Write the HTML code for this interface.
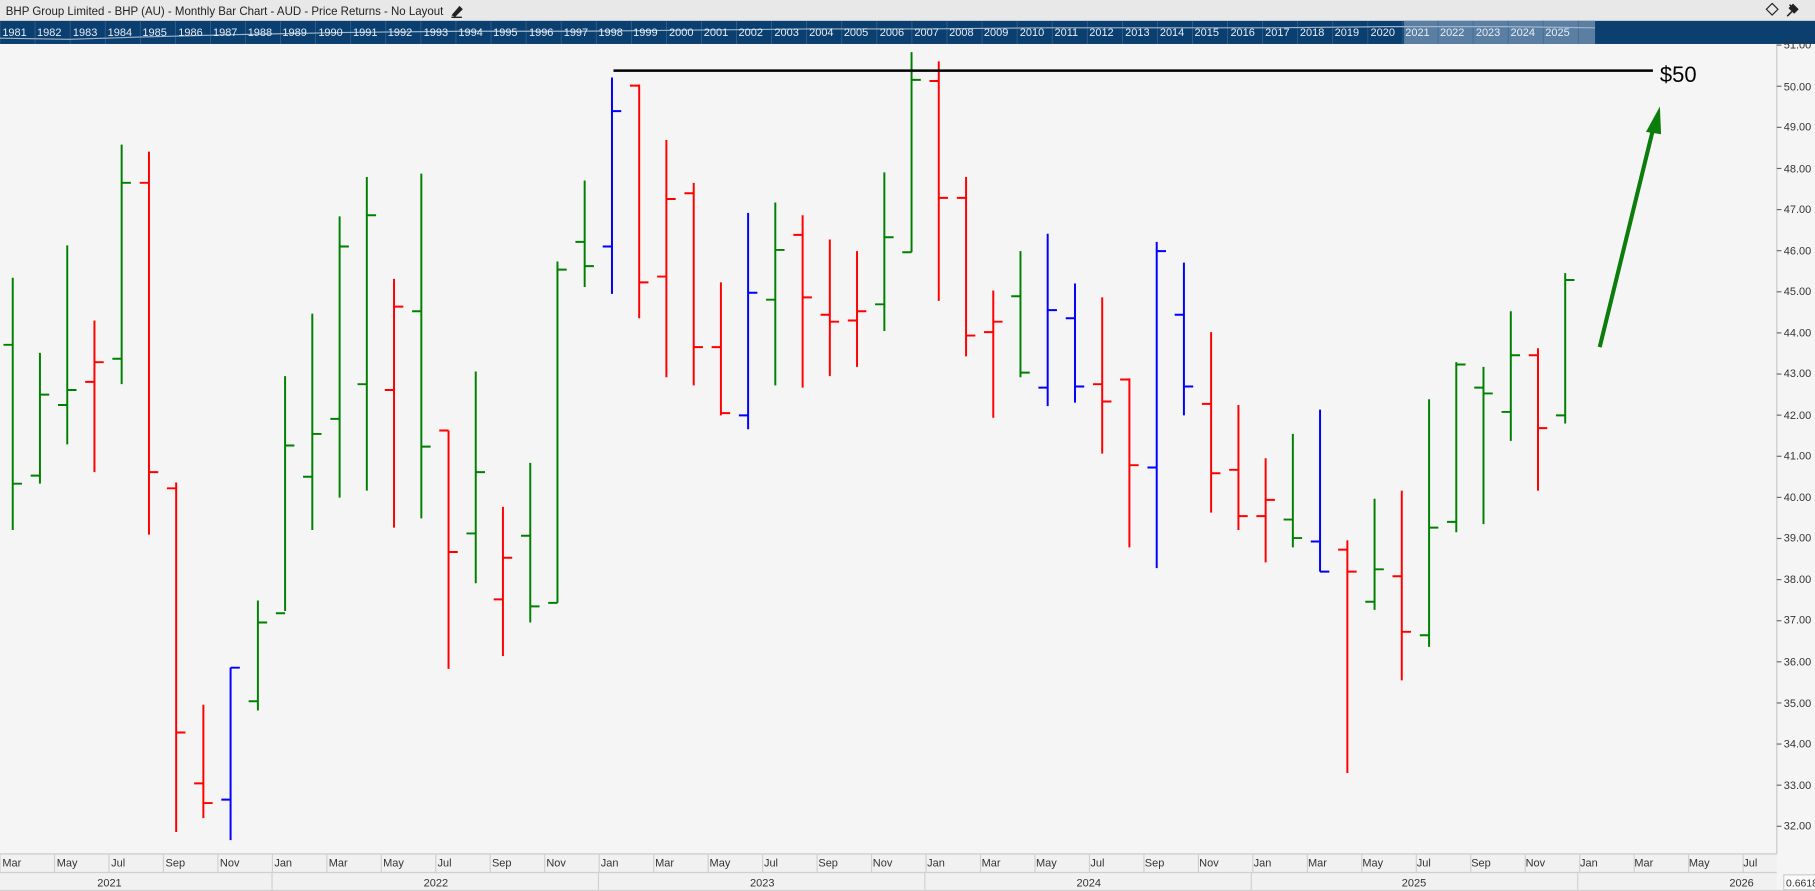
<!DOCTYPE html>
<html><head><meta charset="utf-8"><style>
html,body{margin:0;padding:0;width:1815px;height:891px;overflow:hidden;background:#f5f5f5;font-family:"Liberation Sans",sans-serif}
svg{display:block}
</style></head><body>
<svg id="s" width="1815" height="891" viewBox="0 0 1568 770" preserveAspectRatio="none" xmlns="http://www.w3.org/2000/svg" font-family="Liberation Sans, sans-serif">
<rect x="0" y="0" width="1568" height="770" fill="#f5f5f5"/>
<rect x="0" y="0" width="1568" height="18" fill="#e8e8e8"/>
<text x="5" y="13" font-size="10.5" fill="#222" textLength="378" lengthAdjust="spacingAndGlyphs">BHP Group Limited - BHP (AU) - Monthly Bar Chart - AUD - Price Returns - No Layout</text>
<path d="M391 13 L397 6 L399 8 L393 14 Z M390 15 L399 15" stroke="#222" stroke-width="1.2" fill="#222"/>
<path d="M1531 3 L1536 8 L1531 13 L1526 8 Z" fill="none" stroke="#222" stroke-width="1"/>
<path d="M1546 4 L1552 10 M1549 4 L1553 8 L1550 11 L1546 7 Z M1548 10 L1544 14" stroke="#222" stroke-width="1.3" fill="#222"/>
<rect x="0" y="18" width="1568" height="20" fill="#0b3f70"/>
<rect x="1213" y="18" width="165" height="20" fill="#5b7fa3"/>
<g id="nav" font-size="9.5" fill="#e6eef6"></g>
<path d="M0 33 L60 34 L120 32 L200 30 L300 28 L400 27 L500 27 L600 26 L700 25 L800 25 L900 24 L1000 24 L1100 24 L1200 23 L1300 23 L1378 24" stroke="#9fb6cc" stroke-width="1" fill="none"/>
<line x1="1535" y1="38" x2="1535" y2="738" stroke="#c8c8c8" stroke-width="1"/>
<g id="yax" font-size="9.5" fill="#333"></g>
<g id="bars" stroke-width="1.7" fill="none"></g>
<line x1="530" y1="61" x2="1428" y2="61" stroke="#000" stroke-width="2.2"/>
<text x="1434" y="71" font-size="19" fill="#000">$50</text>
<line x1="1382" y1="300" x2="1428" y2="112" stroke="#0a7d0a" stroke-width="3.5"/>
<path d="M1434 92 L1422 114 L1435 116 Z" fill="#0a7d0a"/>
<rect x="0" y="738" width="1535" height="32" fill="#f1f1f1"/>
<line x1="0" y1="738" x2="1535" y2="738" stroke="#c8c8c8"/>
<line x1="0" y1="754" x2="1535" y2="754" stroke="#d0d0d0"/>
<line x1="0" y1="769.5" x2="1568" y2="769.5" stroke="#d0d0d0"/>
<g id="mx" font-size="9.5" fill="#333"></g>
<g font-size="9.5" fill="#333">
<text x="84" y="766">2021</text><text x="366" y="766">2022</text><text x="648" y="766">2023</text><text x="930" y="766">2024</text><text x="1211" y="766">2025</text><text x="1494" y="766">2026</text>
</g>
<g stroke="#d0d0d0"><line x1="235" y1="754" x2="235" y2="769"/><line x1="517" y1="754" x2="517" y2="769"/><line x1="799" y1="754" x2="799" y2="769"/><line x1="1081" y1="754" x2="1081" y2="769"/><line x1="1363" y1="754" x2="1363" y2="769"/></g>
<rect x="1541" y="756" width="30" height="13" fill="#fafafa" stroke="#ccc"/>
<text x="1543" y="766" font-size="9" fill="#333">0.6618</text>
<g font-size="9.5" fill="#333">
<text x="1541" y="42">51.00</text><text x="1541" y="78">50.00</text><text x="1541" y="113">49.00</text><text x="1541" y="149">48.00</text><text x="1541" y="184">47.00</text><text x="1541" y="220">46.00</text><text x="1541" y="255">45.00</text><text x="1541" y="291">44.00</text><text x="1541" y="326">43.00</text><text x="1541" y="362">42.00</text><text x="1541" y="397">41.00</text><text x="1541" y="433">40.00</text><text x="1541" y="468">39.00</text><text x="1541" y="504">38.00</text><text x="1541" y="539">37.00</text><text x="1541" y="575">36.00</text><text x="1541" y="611">35.00</text><text x="1541" y="646">34.00</text><text x="1541" y="682">33.00</text><text x="1541" y="717">32.00</text>
</g>
<g font-size="9.5" fill="#333">
<text x="2" y="749">Mar</text><text x="49" y="749">May</text><text x="96" y="749">Jul</text><text x="143" y="749">Sep</text><text x="190" y="749">Nov</text><text x="237" y="749">Jan</text><text x="284" y="749">Mar</text><text x="331" y="749">May</text><text x="378" y="749">Jul</text><text x="425" y="749">Sep</text><text x="472" y="749">Nov</text><text x="519" y="749">Jan</text><text x="566" y="749">Mar</text><text x="613" y="749">May</text><text x="660" y="749">Jul</text><text x="707" y="749">Sep</text><text x="754" y="749">Nov</text><text x="801" y="749">Jan</text><text x="848" y="749">Mar</text><text x="895" y="749">May</text><text x="942" y="749">Jul</text><text x="989" y="749">Sep</text><text x="1036" y="749">Nov</text><text x="1083" y="749">Jan</text><text x="1130" y="749">Mar</text><text x="1177" y="749">May</text><text x="1224" y="749">Jul</text><text x="1271" y="749">Sep</text><text x="1318" y="749">Nov</text><text x="1365" y="749">Jan</text><text x="1412" y="749">Mar</text><text x="1459" y="749">May</text><text x="1506" y="749">Jul</text>
</g>
<g font-size="9.5" fill="#e6eef6">
<text x="2" y="31">1981</text><text x="32" y="31">1982</text><text x="63" y="31">1983</text><text x="93" y="31">1984</text><text x="123" y="31">1985</text><text x="154" y="31">1986</text><text x="184" y="31">1987</text><text x="214" y="31">1988</text><text x="244" y="31">1989</text><text x="275" y="31">1990</text><text x="305" y="31">1991</text><text x="335" y="31">1992</text><text x="366" y="31">1993</text><text x="396" y="31">1994</text><text x="426" y="31">1995</text><text x="457" y="31">1996</text><text x="487" y="31">1997</text><text x="517" y="31">1998</text><text x="547" y="31">1999</text><text x="578" y="31">2000</text><text x="608" y="31">2001</text><text x="638" y="31">2002</text><text x="669" y="31">2003</text><text x="699" y="31">2004</text><text x="729" y="31">2005</text><text x="760" y="31">2006</text><text x="790" y="31">2007</text><text x="820" y="31">2008</text><text x="850" y="31">2009</text><text x="881" y="31">2010</text><text x="911" y="31">2011</text><text x="941" y="31">2012</text><text x="972" y="31">2013</text><text x="1002" y="31">2014</text><text x="1032" y="31">2015</text><text x="1063" y="31">2016</text><text x="1093" y="31">2017</text><text x="1123" y="31">2018</text><text x="1153" y="31">2019</text><text x="1184" y="31">2020</text><text x="1214" y="31">2021</text><text x="1244" y="31">2022</text><text x="1275" y="31">2023</text><text x="1305" y="31">2024</text><text x="1335" y="31">2025</text>
</g>
</svg>
<script>
var d=[
["g",240,458,298,418],["g",305,418,411,341],["g",212,384,350,337],["r",277,408,330,313],["g",125,332,310,158],
["r",131,462,158,408],["r",417,719,422,633],["r",609,707,677,694],["b",577,726,691,577],["g",519,614,606,538],
["g",325,528,530,385],["g",271,458,412,375],["g",187,430,362,213],["g",153,424,332,186],["r",241,456,337,265],
["g",150,448,269,386],["r",372,578,372,477],["g",321,504,461,408],["r",438,567,518,482],["g",400,538,463,524],
["g",226,521,521,233],["g",156,248,209,230],["b",67,254,213,96],["r",73,275,74,244],["r",121,326,239,172],
["r",158,333,167,300],["r",244,359,300,357],["b",184,371,359,253],["g",175,333,259,216],["r",186,335,203,257],
["r",207,325,272,278],["r",217,317,277,269],["g",149,286,263,205],["g",45,218,218,69],["r",53,260,70,171],
["r",153,308,171,290],["r",251,361,287,278],["g",217,326,256,322],["b",202,351,335,268],["b",245,348,275,334],
["r",257,392,332,347],["r",327,473,328,402],["b",209,491,404,217],["b",227,359,272,334],["r",287,443,349,409],
["r",350,458,406,446],["r",396,486,446,432],["g",375,473,449,465],["b",354,494,468,494],["r",467,668,475,494],
["g",431,527,520,492],["r",424,588,498,546],["g",345,559,549,456],["g",313,460,451,315],["g",317,453,335,340],
["g",269,381,356,307],["r",301,424,307,370],["g",236,366,359,242]];
var c={g:"#008000",r:"#ff0000",b:"#0000ff"},h="";
d.forEach(function(b,i){var x=(11+i*23.53).toFixed(1);
h+='<path stroke="'+c[b[0]]+'" d="M'+x+' '+b[1]+'V'+b[2]+'M'+(x-8)+' '+b[3]+'H'+x+'M'+x+' '+b[4]+'H'+(+x+8)+'"/>';});
document.getElementById("bars").innerHTML=h;
var m="";for(var i=0;i<33;i++){var x=i*47.06;m+='<line x1="'+x+'" y1="738" x2="'+x+'" y2="754" stroke="#d0d0d0"/>';}
document.getElementById("mx").innerHTML=m;
var n="";for(var i=0;i<46;i++){var x=(i*30.3).toFixed(1);n+='<line x1="'+x+'" y1="18" x2="'+x+'" y2="38" stroke="#3d6690" stroke-width="0.6"/>';}
document.getElementById("nav").innerHTML=n;
var y="";for(var p=32;p<=51;p++){var yy=39+(51-p)*35.53;y+='<line x1="1535" y1="'+yy+'" x2="1539" y2="'+yy+'" stroke="#666"/>';}
document.getElementById("yax").innerHTML=y;
</script>
</body></html>
